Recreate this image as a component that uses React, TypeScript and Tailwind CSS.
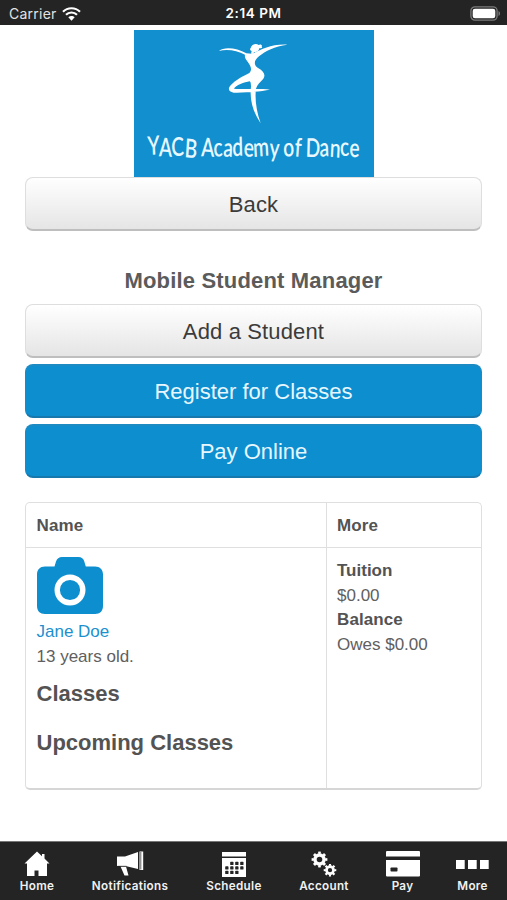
import type { ReactNode } from 'react';

interface NavItem {
  label: string;
  width: string;
  icon: ReactNode;
}

function WifiIcon() {
  return (
    <svg width="19" height="14" viewBox="0 0 57 42" fill="none" stroke="#fff" aria-hidden="true">
      <path d="M3 14.5C17 0 40 0 54 14.5" strokeWidth="6.5" />
      <path d="M12 23.5C21 14 36 14 45 23.5" strokeWidth="6.5" />
      <path d="M28.500 41L19 31C24 26 33 26 38 31Z" fill="#fff" stroke="none" />
    </svg>
  );
}

function BatteryIcon() {
  return (
    <svg width="31" height="15" viewBox="0 0 31 15" aria-hidden="true">
      <rect x="0.900" y="0.900" width="26.200" height="13.200" rx="4" fill="#242424" stroke="#7b7b7b" strokeWidth="1.300" />
      <rect x="2.700" y="2.700" width="22.600" height="9.600" rx="2.300" fill="#fff" />
      <path d="M28.500 5v5c2-.8 2-4.200 0-5z" fill="#7b7b7b" />
    </svg>
  );
}

function StatusBar() {
  return (
    <header className="grid h-[25px] grid-cols-3 items-center bg-[#242424] px-[9px] pt-[2px] font-['Inter',sans-serif] leading-none text-white">
      <div className="flex items-center gap-[5px] text-[14px] text-[#e2e2e2]">
        <span className="tracking-[0.25px]">Carrier</span>
        <WifiIcon />
      </div>
      <div className="text-center text-[13.5px] font-semibold tracking-[0.55px]">2:14 PM</div>
      <div className="-mr-[3px] flex justify-end">
        <BatteryIcon />
      </div>
    </header>
  );
}

function Logo() {
  return (
    <svg width="240" height="147" viewBox="12 12 720 441" className="block bg-[#118fce]" aria-label="YACB Academy of Dance">
      <g fill="#fff">
        <path d="M267 75C282 61 322 66 349 82L366 83C388 74 422 53 472 56C434 61 406 75 387 91C371 104 371 116 383 125C401 134 408 147 400 158C391 168 381 176 378 188C374 218 379 255 392 292C370 258 358 224 363 181C362 174 363 168 359 166C344 168 316 179 312 188C340 191 388 187 420 191C390 196 350 201 311 200C295 198 293 188 302 178C316 162 340 150 358 141C368 130 361 119 355 110C348 101 343 96 345 86C322 74 292 68 267 75Z" />
        <path d="M362 66C365 55 378 51 386 57C391 53 398 57 395 62C400 65 391 69 388 66C388 75 376 80 372 78L370 84L363 83L365 75C360 73 359 69 362 66Z" />
      </g>
      {/* narrow, slightly jittered lettering */}
      <text
        x="54"
        y="391"
        dy="-3 3 0 2 -2 0 1 -1 0 0 2 -1 0 0 -1 1 0 0 0 -1 1"
        rotate="-4 2 -2 5 0 2 -3 4 -2 3 -4 3 0 -3 5 0 2 -3 4 -3 2"
        fill="#e8f8ff"
        fontFamily="Lato, sans-serif"
        fontSize="78"
        fontWeight="600"
        textLength="634"
        lengthAdjust="spacingAndGlyphs"
      >
        YACB Academy of Dance
      </text>
    </svg>
  );
}

function PlainButton({ children }: { children: ReactNode }) {
  return (
    <button className="block h-[54px] w-full rounded-[8px] border border-[#dedede] border-b-2 border-b-[#bebebe] bg-linear-to-b from-white to-[#e5e5e5] pt-px text-center text-[22px] tracking-[0.14px] text-[#3b3b3b]">
      {children}
    </button>
  );
}

function PrimaryButton({ children }: { children: ReactNode }) {
  return (
    <button className="block h-[54px] w-full rounded-[8px] border border-t-2 border-b-2 border-[#1c8bc4] border-b-[#1678ac] bg-[#0d8ecf] text-center text-[22px] text-[#e6f7ff]">
      {children}
    </button>
  );
}

function CameraIcon() {
  return (
    <svg width="66" height="57" viewBox="0 0 66 57" aria-hidden="true">
      <path
        fill="#0d8ecf"
        d="M8 9.500h9.500L19 4.500C20 1.500 22 0 25 0h16.500c3 0 5 1.500 5.800 4.500L48.800 9.500H58c5 0 8 3 8 8V49c0 5-3 8-8 8H8c-5 0-8-3-8-8V17.500c0-5 3-8 8-8z"
      />
      <circle cx="33" cy="33" r="12.800" fill="none" stroke="#fff" strokeWidth="5.400" />
    </svg>
  );
}

function StudentTable() {
  return (
    <div className="grid h-[288px] grid-cols-[301px_1fr] grid-rows-[45px_1fr] rounded-[5px] border border-b-2 border-[#dfdfdf] border-b-[#d6d6d6] text-[17px] leading-[24.5px] text-[#606060]">
      <div className="border-r border-b border-[#dfdfdf] px-[10.5px] pt-[11px] font-bold tracking-[0.15px] text-[#535353]">Name</div>
      <div className="border-b border-[#dfdfdf] px-[10px] pt-[11px] font-bold tracking-[0.15px] text-[#535353]">More</div>
      <div className="border-r border-[#dfdfdf] px-[10.5px] pt-[9px]">
        <CameraIcon />
        <p className="mt-[6px] text-[#1c90cf]">Jane Doe</p>
        <p>13 years old.</p>
        <h3 className="mt-[13px] text-[22px] font-bold text-[#535353]">Classes</h3>
        <h3 className="mt-[24.500px] text-[22px] font-bold text-[#535353]">Upcoming Classes</h3>
      </div>
      <div className="px-[10px] pt-[11px]">
        <p className="font-bold text-[#535353]">Tuition</p>
        <p>$0.00</p>
        <p className="font-bold tracking-[0.1px] text-[#535353]">Balance</p>
        <p>Owes $0.00</p>
      </div>
    </div>
  );
}

function HomeIcon() {
  return (
    <svg width="26" height="26" viewBox="0 0 26 26" fill="#fff" aria-hidden="true">
      <path d="M13 .5L.5 12.500H3V25h7.500v-5.500h4V25H23V12.500h2.500L20.500 7.500V3H18v2.300z" />
    </svg>
  );
}

function MegaphoneIcon() {
  return (
    <svg width="28" height="26" viewBox="0 0 28 26" fill="#fff" aria-hidden="true">
      <path d="M1 5.500h8L22 1v17L9.500 15H1zM23.500 0.500h3.700V19h-3.700zM4.500 15.500h5.500L12.500 24.500H8.500z" />
      <path d="M1.500 15.300h9M24.800 1v17.500" stroke="#242424" strokeWidth=".7" />
    </svg>
  );
}

const calendarDots = [
  [9, 11], [14, 11], [19, 11],
  [4, 15.5], [9, 15.5], [14, 15.5], [19, 15.5],
  [4, 20], [9, 20], [14, 20],
];

function CalendarIcon() {
  return (
    <svg width="24" height="25" viewBox="0 0 24 25" aria-hidden="true">
      <path fill="#fff" d="M0 0h24v4.500H0zM0 6h24v19H0z" />
      {calendarDots.map(([x, y]) => (
        <rect key={`${x}-${y}`} x={x - 0.8} y={y - 1.2} width="3.300" height="3.300" rx=".7" fill="#242424" />
      ))}
    </svg>
  );
}

function GearsIcon() {
  return (
    <svg width="26" height="26" viewBox="0 0 26 26" fill="none" stroke="#fff" aria-hidden="true">
      <circle cx="8.500" cy="8.500" r="4.500" strokeWidth="3.400" />
      <circle cx="8.500" cy="8.500" r="6.700" strokeWidth="2.400" pathLength="80" strokeDasharray="5 5" strokeDashoffset="2.500" />
      <circle cx="19" cy="19.200" r="3.500" strokeWidth="2.700" />
      <circle cx="19" cy="19.200" r="5.200" strokeWidth="2.200" pathLength="80" strokeDasharray="5 5" strokeDashoffset="2.500" />
    </svg>
  );
}

function CardIcon() {
  return (
    <svg width="34" height="26" viewBox="0 0 34 26" aria-hidden="true">
      <path fill="#fff" d="M0 1q0-1 1-1h32q1 0 1 1v4.500H0zM0 9h34v15.500q0 1-1 1H1q-1 0-1-1z" />
      <rect x="4.500" y="16.500" width="7" height="4" rx=".8" fill="#242424" />
    </svg>
  );
}

function DotsIcon() {
  return (
    <svg width="33" height="9" viewBox="0 0 33 9" fill="#fff" aria-hidden="true">
      <path d="M0 0h8.700v9H0zM12 0h8.700v9H12zM24 0h8.700v9H24z" />
    </svg>
  );
}

const navItems: NavItem[] = [
  { label: 'Home', width: 'w-[74px]', icon: <HomeIcon /> },
  { label: 'Notifications', width: 'w-[112px]', icon: <MegaphoneIcon /> },
  { label: 'Schedule', width: 'w-[96px]', icon: <CalendarIcon /> },
  { label: 'Account', width: 'w-[84px]', icon: <GearsIcon /> },
  { label: 'Pay', width: 'w-[73px]', icon: <CardIcon /> },
  { label: 'More', width: 'w-[67px]', icon: <DotsIcon /> },
];

function TabBar() {
  return (
    <nav className="flex h-[59px] border-t border-[#777] bg-[#242424] pt-[9px] text-[#f1f1f1]">
      {navItems.map((item) => (
        <a key={item.label} className={`flex flex-col items-center ${item.width}`}>
          <span className="flex h-[26px] items-center">{item.icon}</span>
          <span className="mt-[2px] font-['Inter',sans-serif] text-[11.7px] leading-[15px] font-semibold tracking-[0.3px]">
            {item.label}
          </span>
        </a>
      ))}
    </nav>
  );
}

export default function App() {
  return (
    <div className="flex h-[900px] w-[507px] flex-col overflow-hidden bg-white font-['Liberation_Sans',Arial,sans-serif]">
      <StatusBar />
      <main className="flex-1 px-[25px] pt-[5px]">
        <div className="flex justify-center">
          <Logo />
        </div>
        <PlainButton>Back</PlainButton>
        <h2 className="mt-[36px] h-[37px] text-center text-[22px] leading-[28px] font-bold tracking-[0.18px] text-[#5b5b5b]">
          Mobile Student Manager
        </h2>
        <div className="flex flex-col gap-[6px]">
          <PlainButton>Add a Student</PlainButton>
          <PrimaryButton>Register for Classes</PrimaryButton>
          <PrimaryButton>Pay Online</PrimaryButton>
        </div>
        <div className="mt-[24px]">
          <StudentTable />
        </div>
      </main>
      <TabBar />
    </div>
  );
}
